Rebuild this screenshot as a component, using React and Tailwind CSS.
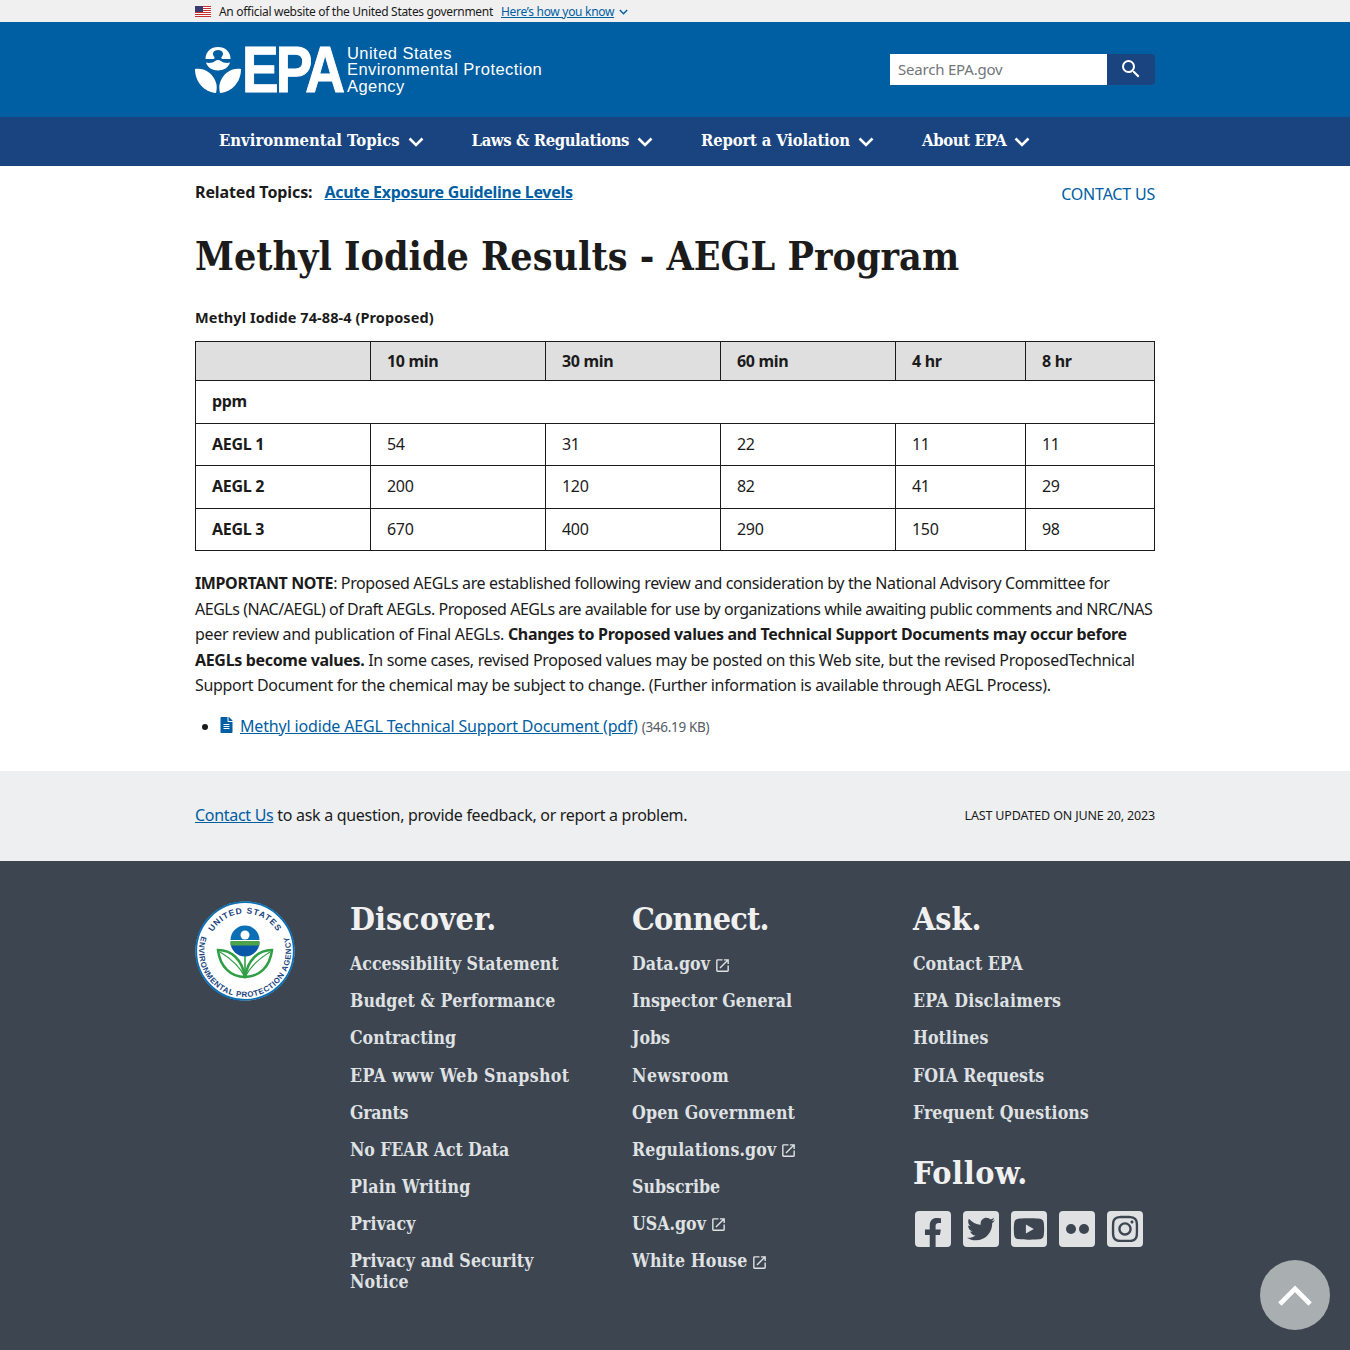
import React from "react";
import { MdOpenInNew, MdSearch } from "react-icons/md";
import { FaFacebookF, FaTwitter, FaYoutube, FaInstagram, FaFileAlt } from "react-icons/fa";

const serif = "font-['DejaVu_Serif',serif] font-stretch-condensed font-bold";

function Chevron({ className }) {
  return (
    <svg viewBox="0 0 16 10" className={className} fill="none" stroke="currentColor" strokeWidth="2.6">
      <path d="M1.5 1.5 8 8l6.5-6.5" />
    </svg>
  );
}

function NavItem({ label, gap, tracking }) {
  return (
    <div className={`flex items-center gap-2 ${gap}`}>
      <span className={`${serif} text-[16.500px] text-white ${tracking || ""}`}>{label}</span>
      <Chevron className="w-[16px] h-[10px] text-white" />
    </div>
  );
}

function Flag() {
  return (
    <svg viewBox="0 0 16 11" className="w-4 h-[11px]">
      <rect width="16" height="11" fill="#fff" />
      {[0, 2, 4, 6, 8, 10].map((y) => (
        <rect key={y} y={y} width="16" height="1" fill="#c8312f" />
      ))}
      <rect width="8" height="6" fill="#3c3b6e" />
    </svg>
  );
}

function Emblem() {
  return (
    <svg viewBox="0 0 46 46" className="w-[46px] h-[46px] shrink-0" fill="#fff">
      <path d="M10.500 12C10.500 4.500 16 0 23 0s12.500 4.500 12.500 12H27.500c-1.500-.5-1.500-1.500-.5-2.500 1-1.200 1.200-2.500.8-3.700C27.200 4 25.200 3 23 3s-4.200 1-4.800 2.800c-.4 1.200-.2 2.500.8 3.700 1 1 1 2-.5 2.500z" />
      <path d="M11 15.500c3.500 1.200 7 0 9.500-1.800 1.300-.8 3.700-.8 5 0 2.500 1.800 6 3 9.500 1.800-1.300 5-6.500 8-12 8s-10.700-3-12-8z" />
      <path d="M0 22c10-1.500 19 5 21.500 15.500.3 2.500.3 5.500-.5 8.500C9 45 0 35 0 22z" />
      <path d="M46 22c-10-1.500-19 5-21.500 15.500-.3 2.500-.3 5.500.5 8.500 12-1 21-11 21-24z" />
    </svg>
  );
}

function Seal() {
  return (
    <svg viewBox="0 0 100 100" className="w-[100px] h-[100px] shrink-0">
      <circle cx="50" cy="50" r="49.500" fill="#fff" />
      <circle cx="50" cy="50" r="48.800" fill="none" stroke="#0a6fb5" strokeWidth="1.800" />
      <defs>
        <path id="sealTop" d="M12.500 50A37.500 37.500 0 0 1 87.500 50" fill="none" />
        <path id="sealBottom" d="M10.200 27A46 46 0 1 0 89.800 27" fill="none" />
      </defs>
      <text fontFamily="'Liberation Sans',sans-serif" fontSize="8.500" fontWeight="700" fill="#1a4480" letterSpacing=".9">
        <textPath href="#sealTop" startOffset="50%" textAnchor="middle">UNITED STATES</textPath>
      </text>
      <text fontFamily="'Liberation Sans',sans-serif" fontSize="7.800" fontWeight="700" fill="#1a4480" letterSpacing=".6">
        <textPath href="#sealBottom" startOffset="50%" textAnchor="middle">ENVIRONMENTAL PROTECTION AGENCY</textPath>
      </text>
      <path d="M35.500 39a14.500 14.500 0 0 1 29 0z" fill="#0a6fb5" />
      <path d="M35.500 41a14.500 14.500 0 0 0 29 0z" fill="#0a56a8" />
      <rect x="35.500" y="40" width="29" height="4.500" fill="#4ea34a" />
      <circle cx="50" cy="34" r="4.500" fill="#fff" />
      <path d="M50 55v22" stroke="#2f9e44" strokeWidth="1.600" />
      <path d="M50 76C36 76 25 66 23 49c13 0 24 9 27 27z" fill="#fff" stroke="#2f9e44" strokeWidth="2.500" />
      <path d="M50 76c14 0 25-10 27-27-13 0-24 9-27 27z" fill="#fff" stroke="#2f9e44" strokeWidth="2.500" />
      <path d="M25 51c10 6 20 15 25 25M75 51c-10 6-20 15-25 25" stroke="#2f9e44" strokeWidth="1.200" fill="none" />
    </svg>
  );
}

function FooterLink({ label, ext, extra }) {
  return (
    <a className={`${serif} text-[17.600px] leading-[21px] text-[#dfe1e2] flex items-center gap-[4px] mb-[16.100px] ${extra || ""}`}>
      <span>{label}</span>
      {ext && <MdOpenInNew className="w-[17px] h-[17px] mt-[3px] shrink-0" />}
    </a>
  );
}

function Social({ children }) {
  return (
    <div className="w-9 h-9 rounded-[4px] bg-[#dfe1e2] flex items-center justify-center overflow-hidden text-[#3d4551]">
      {children}
    </div>
  );
}

const rows = [
  ["AEGL 1", "54", "31", "22", "11", "11", "h-[42px]"],
  ["AEGL 2", "200", "120", "82", "41", "29", "h-[43px]"],
  ["AEGL 3", "670", "400", "290", "150", "98", "h-[42px]"],
];

const heading = `${serif} text-[32px] leading-[36px] text-[#f0f0f0]`;

export default function App() {
  return (
    <div className="font-['Noto_Sans',sans-serif] text-[#1b1b1b] min-h-[1350px] relative overflow-hidden bg-white">
      {/* gov banner */}
      <div className="h-[22px] bg-[#f0f0f0]">
        <div className="w-[960px] mx-auto flex items-center h-full pt-[1px] text-[12px] tracking-[-0.3px]">
          <Flag />
          <span className="ml-2">An official website of the United States government</span>
          <a className="ml-2 text-[#005ea2] underline">Here’s how you know</a>
          <Chevron className="w-[9px] h-[6px] ml-[5px] text-[#005ea2]" />
        </div>
      </div>

      {/* header */}
      <header className="h-[95px] bg-[#005ea2]">
        <div className="w-[960px] mx-auto h-full flex items-center justify-between">
          <div className="flex items-center">
            <Emblem />
            <span className="font-['Liberation_Sans',sans-serif] font-bold text-white text-[64px] leading-none inline-block w-[105px] ml-[1px] origin-left scale-x-[.86] tracking-[-3.500px] [-webkit-text-stroke:1px_white]">EPA</span>
            <div className="font-['Liberation_Sans',sans-serif] text-white text-[16.500px] leading-[16.500px] tracking-[.45px] whitespace-nowrap">
              <div>United States</div>
              <div>Environmental Protection</div>
              <div>Agency</div>
            </div>
          </div>
          <div className="flex h-[31px] mt-[-1px]">
            <div className="w-[217px] h-[31px] bg-white pl-2 flex items-center text-[15px] tracking-[-0.2px] text-[#71767a]">Search EPA.gov</div>
            <div className="w-[48px] bg-[#1a4480] rounded-r-[4px] flex items-center justify-center">
              <MdSearch className="w-[24px] h-[24px] text-white" />
            </div>
          </div>
        </div>
      </header>

      {/* nav */}
      <nav className="h-[49px] bg-[#1a4480]">
        <div className="w-[960px] mx-auto h-full flex items-center pl-6">
          <NavItem label="Environmental Topics" gap="mr-12" />
          <NavItem label="Laws & Regulations" gap="mr-12" tracking="tracking-[-0.4px]" />
          <NavItem label="Report a Violation" gap="mr-12" tracking="tracking-[-0.17px]" />
          <NavItem label="About EPA" gap="" tracking="tracking-[-0.33px]" />
        </div>
      </nav>

      {/* main */}
      <main className="w-[960px] mx-auto h-[605px]">
        <div className="flex justify-between pt-[14px] h-[50px]">
          <div className="flex font-bold text-[16px] tracking-[-0.3px]">
            <span className="tracking-[-0.1px]">Related Topics:</span>
            <a className="ml-3 text-[#005ea2] underline">Acute Exposure Guideline Levels</a>
          </div>
          <a className="text-[#005ea2] text-[16px] mt-[2px] tracking-[-0.2px]">CONTACT US</a>
        </div>
        <h1 className={`${serif} text-[39.100px] leading-[48px] mt-[16px]`}>Methyl Iodide Results - AEGL Program</h1>
        <p className="font-bold text-[14.500px] leading-[20px] mt-[27px] mb-[14px] tracking-[.08px]">Methyl Iodide 74-88-4 (Proposed)</p>
        <table className="w-[960px] border-collapse table-fixed text-[16px] tracking-[-0.3px]">
          <colgroup>
            <col className="w-[175px]" />
            <col className="w-[175px]" />
            <col className="w-[175px]" />
            <col className="w-[175px]" />
            <col className="w-[130px]" />
            <col className="w-[129px]" />
          </colgroup>
          <thead>
            <tr className="h-[39px] bg-[#dfdfdf] font-bold">
              <th className="border border-[#1b1b1b]" />
              {["10 min", "30 min", "60 min", "4 hr", "8 hr"].map((h) => (
                <th key={h} className="border border-[#1b1b1b] text-left pl-4 font-bold">{h}</th>
              ))}
            </tr>
          </thead>
          <tbody>
            <tr className="h-[43px]">
              <td colSpan={6} className="border border-[#1b1b1b] pl-4 pb-[2px] font-bold">ppm</td>
            </tr>
            {rows.map((r) => (
              <tr key={r[0]} className={r[6]}>
                <td className="border border-[#1b1b1b] pl-4 pb-[2px] font-bold">{r[0]}</td>
                {r.slice(1, 6).map((c, i) => (
                  <td key={i} className="border border-[#1b1b1b] pl-4 pb-[2px]">{c}</td>
                ))}
              </tr>
            ))}
          </tbody>
        </table>
        <div className="text-[16px] leading-[25.500px] mt-5 whitespace-nowrap">
          <div className="tracking-[-0.375px]"><b>IMPORTANT NOTE</b>: Proposed AEGLs are established following review and consideration by the National Advisory Committee for</div>
          <div className="tracking-[-0.47px]">AEGLs (NAC/AEGL) of Draft AEGLs. Proposed AEGLs are available for use by organizations while awaiting public comments and NRC/NAS</div>
          <div className="tracking-[-0.31px]">peer review and publication of Final AEGLs. <b>Changes to Proposed values and Technical Support Documents may occur before</b></div>
          <div className="tracking-[-0.33px]"><b>AEGLs become values.</b> In some cases, revised Proposed values may be posted on this Web site, but the revised ProposedTechnical</div>
          <div className="tracking-[-0.33px]">Support Document for the chemical may be subject to change. (Further information is available through AEGL Process).</div>
        </div>
        <ul className="list-disc pl-[25px] mt-[14px] text-[16px] tracking-[-0.16px]">
          <li className="leading-[26px]">
            <FaFileAlt className="inline w-[13px] h-[16px] text-[#005ea2] mr-[7px] mb-[4px]" />
            <a className="text-[#005ea2] underline">Methyl iodide AEGL Technical Support Document (pdf)</a>
            <span className="text-[13.500px] tracking-[-0.3px] text-[#565c65] ml-1">(346.19 KB)</span>
          </li>
        </ul>
      </main>

      {/* last updated */}
      <div className="h-[90px] bg-[#edeff0]">
        <div className="w-[960px] mx-auto h-full flex items-center justify-between">
          <p className="text-[16px] tracking-[-0.3px] pb-[2px]"><a className="text-[#005ea2] underline">Contact Us</a> to ask a question, provide feedback, or report a problem.</p>
          <p className="text-[12.500px] tracking-[-0.15px]">LAST UPDATED ON JUNE 20, 2023</p>
        </div>
      </div>

      {/* footer */}
      <footer className="h-[489px] bg-[#3d4551]">
        <div className="w-[960px] mx-auto flex pt-[40px]">
          <div className="w-[155px]"><Seal /></div>
          <div className="w-[282px]">
            <h2 className={`${heading} mb-[16.300px]`}>Discover.</h2>
            <FooterLink label="Accessibility Statement" />
            <FooterLink label="Budget & Performance" extra="tracking-[.1px]" />
            <FooterLink label="Contracting" />
            <FooterLink label="EPA www Web Snapshot" extra="tracking-[.35px]" />
            <FooterLink label="Grants" extra="tracking-[-0.3px]" />
            <FooterLink label="No FEAR Act Data" extra="tracking-[-0.12px]" />
            <FooterLink label="Plain Writing" extra="tracking-[.15px]" />
            <FooterLink label="Privacy" extra="tracking-[.15px]" />
            <FooterLink label="Privacy and Security Notice" extra="w-[230px] tracking-[.08px]" />
          </div>
          <div className="w-[281px]">
            <h2 className={`${heading} mb-[16.300px] tracking-[-0.8px]`}>Connect.</h2>
            <FooterLink label="Data.gov" ext />
            <FooterLink label="Inspector General" />
            <FooterLink label="Jobs" />
            <FooterLink label="Newsroom" extra="tracking-[.5px]" />
            <FooterLink label="Open Government" extra="tracking-[.15px]" />
            <FooterLink label="Regulations.gov" ext extra="tracking-[.1px]" />
            <FooterLink label="Subscribe" />
            <FooterLink label="USA.gov" ext />
            <FooterLink label="White House" ext extra="tracking-[.1px]" />
          </div>
          <div className="flex-1">
            <h2 className={`${heading} mb-[16.300px]`}>Ask.</h2>
            <FooterLink label="Contact EPA" />
            <FooterLink label="EPA Disclaimers" extra="tracking-[.2px]" />
            <FooterLink label="Hotlines" />
            <FooterLink label="FOIA Requests" />
            <FooterLink label="Frequent Questions" extra="tracking-[.05px]" />
            <h2 className={`${heading} mt-[32.200px] mb-[20px] tracking-[.6px]`}>Follow.</h2>
            <div className="flex gap-3 pl-[2px]">
              <Social><FaFacebookF className="w-[30px] h-[30px] mt-[8px]" /></Social>
              <Social><FaTwitter className="w-[28px] h-[28px]" /></Social>
              <Social><FaYoutube className="w-[32px] h-[32px]" /></Social>
              <Social>
                <div className="flex gap-[3px]">
                  <div className="w-[10px] h-[10px] rounded-full bg-[#3d4551]" />
                  <div className="w-[10px] h-[10px] rounded-full bg-[#3d4551]" />
                </div>
              </Social>
              <Social><FaInstagram className="w-[30px] h-[30px]" /></Social>
            </div>
          </div>
        </div>
      </footer>

      {/* back to top */}
      <div className="absolute left-[1260px] top-[1260px] w-[70px] h-[70px] rounded-full bg-[#a9aeb1] flex items-center justify-center">
        <svg viewBox="0 0 36 24" className="w-[34px] h-[23px]" fill="none" stroke="#fff" strokeWidth="5"><path d="M2 21 18 5l16 16" /></svg>
      </div>
    </div>
  );
}
